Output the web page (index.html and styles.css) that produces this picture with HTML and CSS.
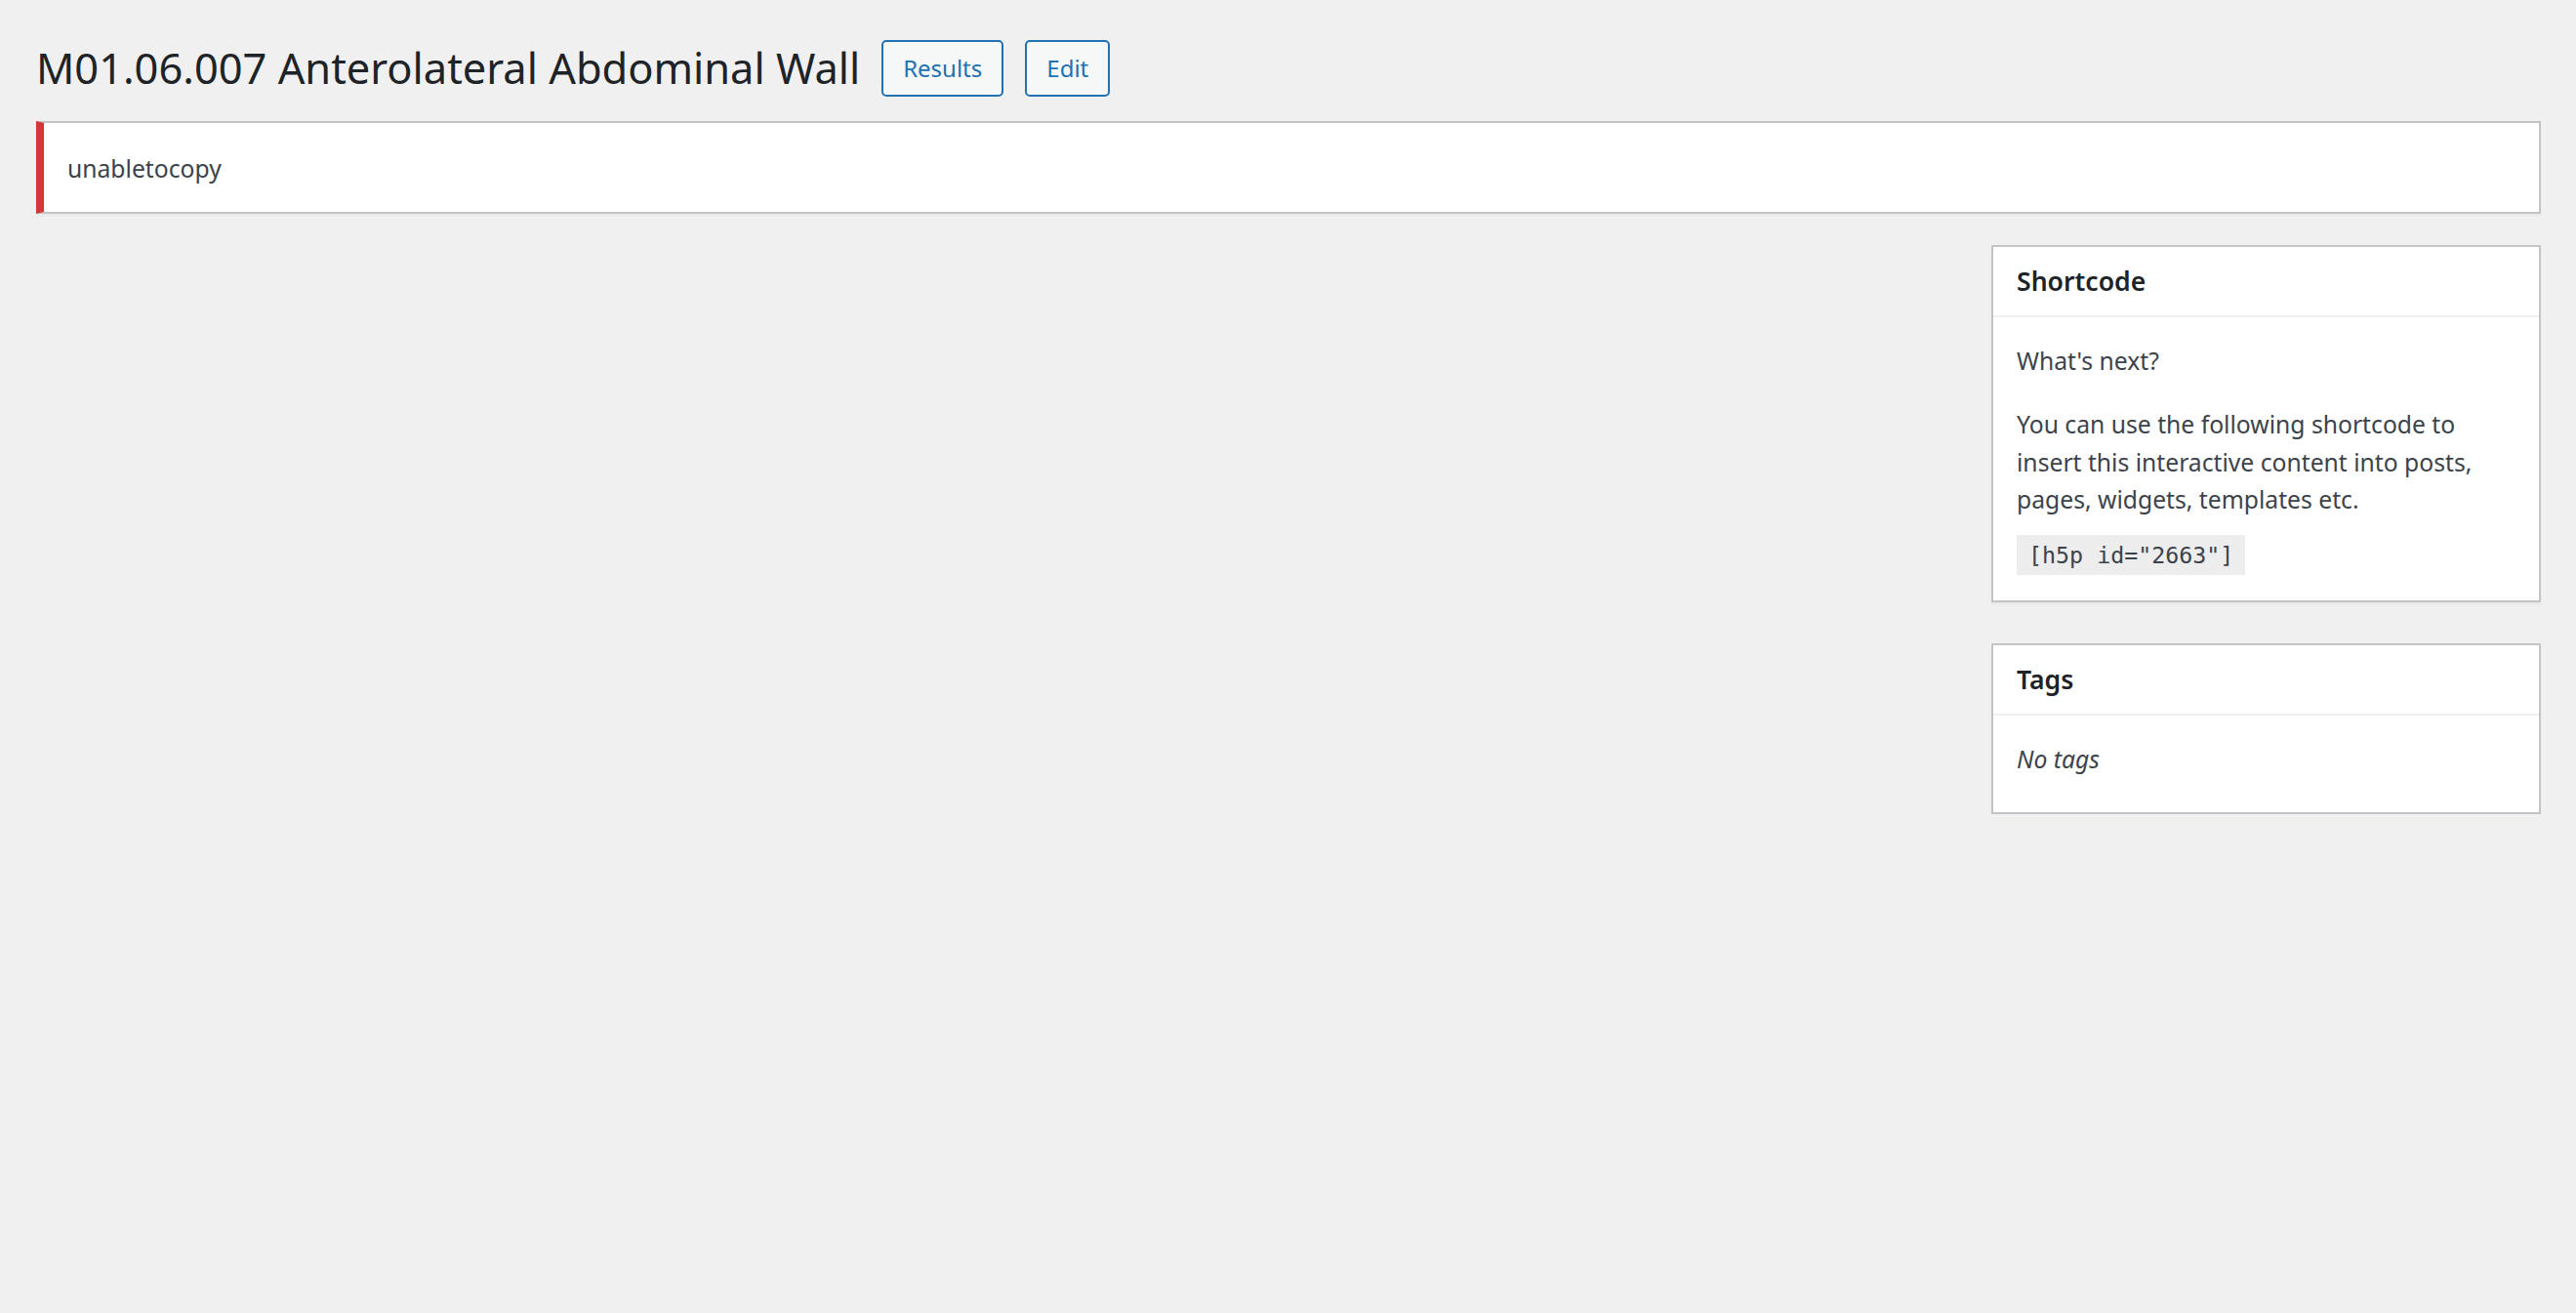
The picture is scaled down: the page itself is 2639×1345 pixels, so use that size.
FILE: index.html
```html
<!DOCTYPE html>
<html lang="en">
<head>
  <meta charset="UTF-8" />
  <meta name="viewport" content="width=device-width, initial-scale=1.0"/>
  <title>M01.06.007 Anterolateral Abdominal Wall</title>
  <link rel="stylesheet" href="styles.css">
</head>
<body>
  <div class="wrap">
    <div class="page-head">
      <h1>M01.06.007 Anterolateral Abdominal Wall</h1>
      <a class="title-action" href="#">Results</a>
      <a class="title-action" href="#">Edit</a>
    </div>

    <div class="notice notice-error">
      <p>unabletocopy</p>
    </div>

    <div class="columns">
      <div class="main-col"></div>
      <div class="side-col">
        <div class="postbox">
          <h2 class="postbox-title">Shortcode</h2>
          <div class="postbox-body">
            <p>What's next?</p>
            <p class="shortcode-info">You can use the following shortcode to insert this interactive content into posts, pages, widgets, templates etc.</p>
            <code>[h5p id="2663"]</code>
          </div>
        </div>

        <div class="postbox">
          <h2 class="postbox-title">Tags</h2>
          <div class="postbox-body tags-body">
            <p><em>No tags</em></p>
          </div>
        </div>
      </div>
    </div>
  </div>
</body>
</html>
```

FILE: styles.css
```css
html, body { margin: 0; padding: 0; }
body {
  background-color: #f0f0f1;
  color: #3c434a;
  font-family: "Noto Sans", "Open Sans", Arial, sans-serif;
  font-size: 24.7px;
  line-height: 1.56;
}
.wrap { padding: 0 36px 0 37px; }

.page-head {
  display: flex; align-items: flex-start; gap: 22px;
  padding-top: 41px; height: 58px;
}
.page-head h1 {
  margin: 0;
  font-size: 43.4px; font-weight: 400; line-height: 58px; color: #1d2327;
}
.title-action {
  display: inline-block; box-sizing: border-box; height: 58px;
  padding: 0 20px; line-height: 54px;
  border: 2px solid #2271b1; border-radius: 5px;
  background-color: #f6f7f7; color: #2271b1;
  font-size: 24px; text-decoration: none;
}

.notice {
  margin-top: 25px; box-sizing: border-box; height: 95px;
  display: flex; align-items: center;
  background: #fff;
  border: 2px solid #c3c4c7; border-left: 8px solid #d63638;
  box-shadow: 0 2px 2px rgba(0, 0, 0, .04);
  padding: 3px 24px 0;
}
.notice p { margin: 0; }

.columns { display: flex; gap: 40px; margin-top: 32px; }
.main-col { flex: 1; }
.side-col { width: 563px; display: flex; flex-direction: column; gap: 42px; }

.postbox {
  background: #fff; border: 2px solid #c3c4c7;
  box-shadow: 0 2px 2px rgba(0, 0, 0, .04);
}
.postbox-title {
  margin: 0; padding: 0 24px; height: 70px; line-height: 70px;
  font-size: 26.6px; font-weight: 600; color: #1d2327;
  border-bottom: 2px solid #f0f0f1;
}
.postbox-body { padding: 26px 24px 26px; }
.postbox-body p { margin: 0 0 26.5px; line-height: 38.5px; }
.postbox-body .shortcode-info { margin-bottom: 16.5px; }
.postbox-body code {
  display: inline-block; padding: 6px 12px; line-height: 29px;
  background: #ededed; color: #3c434a;
  font-family: "DejaVu Sans Mono", "Liberation Mono", monospace; font-size: 23.3px;
}
.tags-body { padding-bottom: 8px; }
```
